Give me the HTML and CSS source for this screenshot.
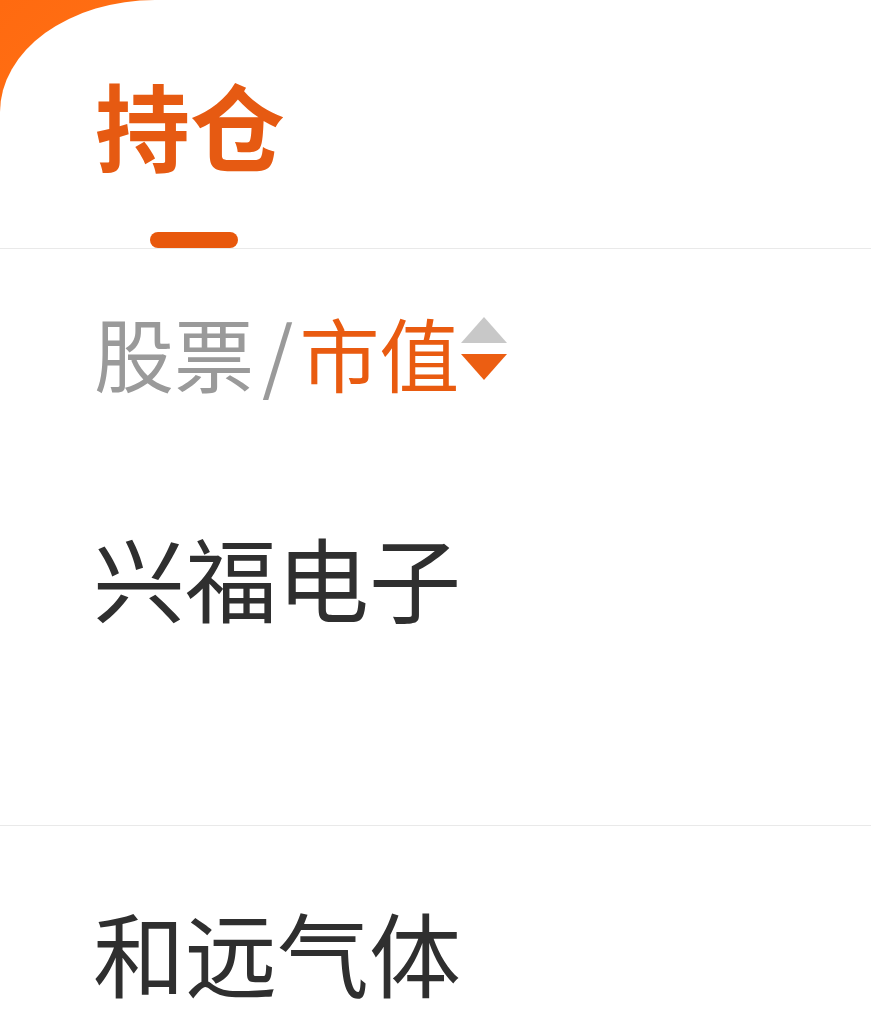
FILE: index.html
```html
<!DOCTYPE html>
<html lang="zh-CN">
<head>
    <meta charset="UTF-8">
    <meta name="viewport" content="width=device-width, initial-scale=1.0">
    <title>持仓</title>
    <link rel="stylesheet" href="styles.css">
</head>
<body>
    <div class="page">
        <div class="card">
            <div class="tabs">
                <div class="tab active">
                    <span class="tabTitle">持仓</span>
                    <span class="tabLine"></span>
                </div>
            </div>
            <div class="colHead">
                <span class="colName">股票</span>
                <span class="slash">/</span>
                <span class="colSort">市值</span>
                <svg class="sortIcon" width="48" height="64" viewBox="0 0 48 64">
                    <path d="M24 0 L47 26 L1 26 Z" fill="#c8c8c8"/>
                    <path d="M1 37 L47 37 L24 63 Z" fill="#ec5e12"/>
                </svg>
                <span class="colRight">持仓/可用</span>
            </div>
            <div class="row">
                <div class="stockName">兴福电子</div>
            </div>
            <div class="row">
                <div class="stockName">和远气体</div>
            </div>
        </div>
    </div>
</body>
</html>
```

FILE: styles.css
```css
body {
    margin: 0;
    background: #ffffff;
    font-family: "Noto Sans CJK SC", "Noto Sans", sans-serif;
}
.page {
    width: 871px;
    height: 1024px;
    background: linear-gradient(135deg, #ff6a10 0%, #ff8a2a 60%);
    overflow: hidden;
}
.card {
    height: 100%;
    background: #ffffff;
    border-top-left-radius: 155px 112px;
    overflow: hidden;
}
.tabs {
    padding-left: 95px;
    padding-top: 76px;
    border-bottom: 1px solid #e9e9e9;
}
.tab {
    display: inline-flex;
    flex-direction: column;
    align-items: center;
}
.tabTitle {
    font-size: 95px;
    line-height: 95px;
    font-weight: 700;
    color: #e65a12;
}
.tabLine {
    width: 88px;
    height: 16px;
    margin-top: 61px;
    margin-left: 8px;
    border-radius: 8px;
    background: #e8580c;
}
.colHead {
    display: flex;
    align-items: center;
    padding: 62px 0 60px 94px;
    font-size: 80px;
    line-height: 80px;
}
.colName {
    color: #9a9a9a;
}
.slash {
    color: #9a9a9a;
    margin: 0 6px 0 8px;
}
.colSort {
    color: #e95b10;
}
.sortIcon {
    margin-left: 1px;
    margin-top: -4px;
}
.colRight {
    margin-left: auto;
    margin-right: -366px;
    color: #9a9a9a;
    white-space: nowrap;
}
.row {
    padding: 79px 0 203px 93px;
    border-bottom: 1px solid #e9e9e9;
}
.stockName {
    font-size: 92px;
    line-height: 92px;
    color: #2f2f2f;
}
```
